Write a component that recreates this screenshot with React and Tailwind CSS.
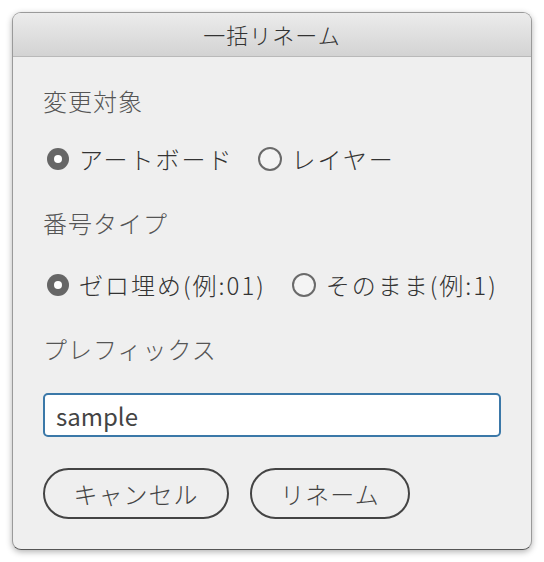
import { useState } from 'react'

const font = { fontFamily: '"Noto Sans CJK JP", "Noto Sans", sans-serif' }

function Radio({ checked, label, onClick }) {
  return (
    <button type="button" onClick={onClick} className="flex items-center gap-[10px] text-[24px] font-light tracking-[2px] text-[#333]">
      {checked ? (
        <span className="flex h-[22px] w-[22px] items-center justify-center rounded-full bg-[#666]">
          <span className="h-[8px] w-[8px] rounded-full bg-white" />
        </span>
      ) : (
        <span className="h-[24px] w-[24px] rounded-full border-2 border-[#6a6a6a] bg-[#f4f4f4]" />
      )}
      <span className="leading-none">{label}</span>
    </button>
  )
}

export default function App() {
  const [target, setTarget] = useState('artboard')
  const [numType, setNumType] = useState('zero')
  const [prefix, setPrefix] = useState('sample')

  return (
    <div className="min-h-[562px] bg-white pt-[12px] pl-[12px]" style={font}>
      <div className="w-[520px] h-[538px] overflow-hidden rounded-[9px] border border-[#9a9a9a] border-b-[#555] bg-[#efefef] shadow-[0_2px_6px_rgba(0,0,0,0.3)]">
        {/* Title bar */}
        <div className="flex h-[44px] items-center justify-center border-b border-[#b9b9b9] bg-gradient-to-b from-[#ececec] to-[#d3d3d3] text-[22px] font-light tracking-[1px] text-[#333]">
          一括リネーム
        </div>

        <div className="pl-[30px] pr-[30px]">
          <div className="mt-[24px] flex h-[40px] items-center text-[24px] font-light tracking-[1px] text-[#555]">変更対象</div>
          <div className="mt-[18px] flex h-[40px] items-center gap-[24px] pl-[4px]">
            <Radio checked={target === 'artboard'} label="アートボード" onClick={() => setTarget('artboard')} />
            <Radio checked={target === 'layer'} label="レイヤー" onClick={() => setTarget('layer')} />
          </div>

          <div className="mt-[24px] flex h-[40px] items-center text-[24px] font-light tracking-[1px] text-[#555]">番号タイプ</div>
          <div className="mt-[22px] flex h-[40px] items-center gap-[26px] pl-[4px]">
            <Radio checked={numType === 'zero'} label="ゼロ埋め(例:01)" onClick={() => setNumType('zero')} />
            <Radio checked={numType === 'raw'} label="そのまま(例:1)" onClick={() => setNumType('raw')} />
          </div>

          <div className="mt-[24px] flex h-[40px] items-center text-[24px] font-light tracking-[1px] text-[#555]">プレフィックス</div>
          <input
            value={prefix}
            onChange={e => setPrefix(e.target.value)}
            className="mt-[24px] h-[44px] w-[458px] rounded-[5px] border-2 border-[#3b78a8] bg-white px-[11px] text-[24px] text-[#444] outline-none"
            style={font}
          />

          <div className="mt-[31px] flex gap-[21px]">
            <button type="button" className="flex h-[51px] w-[186px] items-center justify-center rounded-full border-2 border-[#444] text-[24px] font-light tracking-[1px] text-[#444]">
              キャンセル
            </button>
            <button type="button" className="flex h-[51px] w-[160px] items-center justify-center rounded-full border-2 border-[#444] text-[24px] font-light tracking-[1px] text-[#444]">
              リネーム
            </button>
          </div>
        </div>
      </div>
    </div>
  )
}
